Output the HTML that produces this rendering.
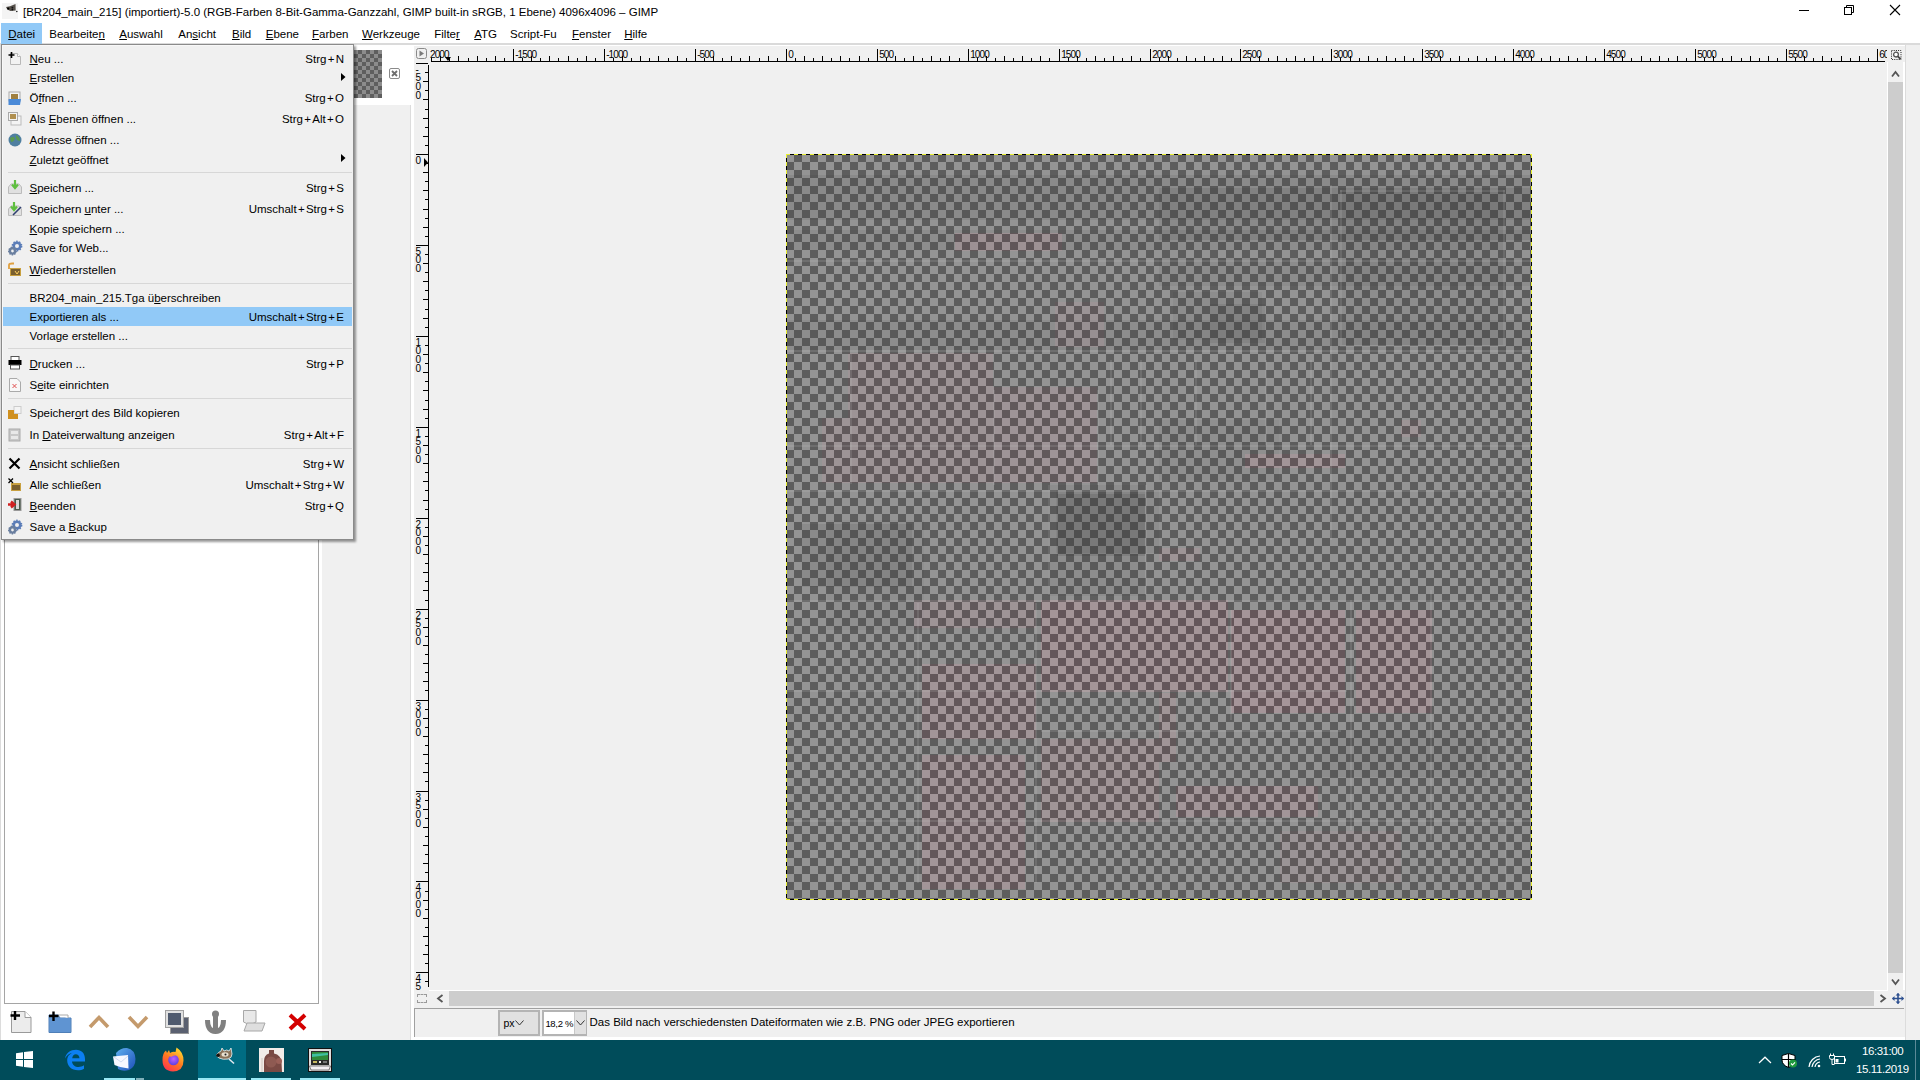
<!DOCTYPE html><html><head><meta charset="utf-8"><style>
html,body{margin:0;padding:0;}
body{width:1920px;height:1080px;overflow:hidden;position:relative;background:#f0f0f0;font-family:"Liberation Sans", sans-serif;}
.t{position:absolute;white-space:nowrap;}
.r{position:absolute;}
u{text-decoration:underline;text-underline-offset:1px;text-decoration-thickness:1px;}
svg{position:absolute;overflow:visible;}
</style></head><body>

<div class="r" style="left:0px;top:0px;width:1920px;height:43px;background:#fff"></div>
<div class="r" style="left:0px;top:43px;width:1920px;height:2px;background:#dadada"></div>
<svg style="left:0px;top:0px" width="20" height="20" viewBox="0 0 20 20"><rect x="2" y="3" width="16" height="16" fill="#f4f4f4"/><path d="M6 7 L10 6.3 L15.5 4 L15.7 10.5 L10.5 10.9 L7.3 9.6 Z" fill="#55504a"/><circle cx="8.2" cy="8.6" r="1.1" fill="#000"/><circle cx="12.4" cy="7.6" r="0.9" fill="#111"/><circle cx="12.4" cy="9.6" r="0.9" fill="#111"/><circle cx="16.8" cy="11.5" r="0.8" fill="#222"/></svg>
<div class="t" style="left:23px;top:7.27px;font-size:11.5px;line-height:11.5px;color:#000;">[BR204_main_215] (importiert)-5.0 (RGB-Farben 8-Bit-Gamma-Ganzzahl, GIMP built-in sRGB, 1 Ebene) 4096x4096 – GIMP</div>
<div class="r" style="left:1799px;top:10px;width:10px;height:1px;background:#000"></div>
<svg style="left:1843px;top:4px" width="12" height="12" viewBox="0 0 12 12"><rect x="1.5" y="3.5" width="7" height="7" fill="none" stroke="#000" stroke-width="1"/><path d="M3.5 3.5 V1.5 H10.5 V8.5 H8.5" fill="none" stroke="#000" stroke-width="1"/></svg>
<svg style="left:1889px;top:4px" width="12" height="12" viewBox="0 0 12 12"><path d="M1 1 L11 11 M11 1 L1 11" stroke="#000" stroke-width="1.1"/></svg>
<div class="r" style="left:1px;top:23px;width:41px;height:21px;background:#91c9f7"></div>
<div class="t" style="left:8.25px;top:29.07px;font-size:11.5px;line-height:11.5px;color:#000;"><u>D</u>atei</div>
<div class="t" style="left:49.25px;top:29.07px;font-size:11.5px;line-height:11.5px;color:#000;">Bearbeite<u>n</u></div>
<div class="t" style="left:119.25px;top:29.07px;font-size:11.5px;line-height:11.5px;color:#000;"><u>A</u>uswahl</div>
<div class="t" style="left:178.25px;top:29.07px;font-size:11.5px;line-height:11.5px;color:#000;">An<u>s</u>icht</div>
<div class="t" style="left:232px;top:29.07px;font-size:11.5px;line-height:11.5px;color:#000;"><u>B</u>ild</div>
<div class="t" style="left:265.75px;top:29.07px;font-size:11.5px;line-height:11.5px;color:#000;"><u>E</u>bene</div>
<div class="t" style="left:312px;top:29.07px;font-size:11.5px;line-height:11.5px;color:#000;"><u>F</u>arben</div>
<div class="t" style="left:362px;top:29.07px;font-size:11.5px;line-height:11.5px;color:#000;"><u>W</u>erkzeuge</div>
<div class="t" style="left:434.25px;top:29.07px;font-size:11.5px;line-height:11.5px;color:#000;">Filte<u>r</u></div>
<div class="t" style="left:474.25px;top:29.07px;font-size:11.5px;line-height:11.5px;color:#000;"><u>A</u>TG</div>
<div class="t" style="left:510px;top:29.07px;font-size:11.5px;line-height:11.5px;color:#000;">Script-Fu</div>
<div class="t" style="left:572px;top:29.07px;font-size:11.5px;line-height:11.5px;color:#000;"><u>F</u>enster</div>
<div class="t" style="left:624.25px;top:29.07px;font-size:11.5px;line-height:11.5px;color:#000;"><u>H</u>ilfe</div>
<div class="r" style="left:0px;top:45px;width:413px;height:995px;background:#fff"></div>
<div class="r" style="left:322px;top:105px;width:88px;height:935px;background:#f0f0f0"></div>
<div class="r" style="left:410px;top:105px;width:1px;height:935px;background:#dcdcdc"></div>
<div class="r" style="left:0px;top:45px;width:1px;height:995px;background:#dcdcdc"></div>
<div class="r" style="left:4px;top:480px;width:315px;height:524px;background:#fff;border:1px solid #a5a5a5;border-top:none;box-sizing:border-box"></div>
<div class="r" style="left:330px;top:50px;width:52px;height:48px;background-color:#8c8c8c;background-image:linear-gradient(45deg,#5e5e5e 25%,transparent 25%,transparent 75%,#5e5e5e 75%),linear-gradient(45deg,#5e5e5e 25%,transparent 25%,transparent 75%,#5e5e5e 75%);background-size:8px 8px;background-position:0 0,4px 4px"></div>
<svg style="left:389px;top:68px" width="11" height="11" viewBox="0 0 11 11"><rect x="0.5" y="0.5" width="10" height="10" rx="1.5" fill="#fff" stroke="#8a8a8a"/><path d="M3 3 L8 8 M8 3 L3 8" stroke="#6e6e6e" stroke-width="1.8"/></svg>
<svg style="left:10px;top:1010px" width="22" height="24" viewBox="0 0 22 24"><path d="M1.5 1.5 H15 L21 7.5 V22.5 H1.5 Z" fill="#ececec" stroke="#9a9a9a"/><path d="M15 1.5 V7.5 H21" fill="#fff" stroke="#9a9a9a"/><path d="M5 1 V10 M0.5 5.5 H10" stroke="#000" stroke-width="2.4"/></svg>
<svg style="left:48px;top:1011px" width="24" height="23" viewBox="0 0 24 23"><path d="M1 4 H10 L12 7 H23 V21.5 H1 Z" fill="#6a9fd8" stroke="#4f7fb8"/><rect x="2" y="7" width="20" height="14" fill="#5f94d2"/><path d="M10 4 H20 V7" fill="#fff" stroke="#aaa"/><path d="M5.5 0.5 V10 M1 5 H10.5" stroke="#000" stroke-width="2.4"/></svg>
<svg style="left:88px;top:1014px" width="22" height="15" viewBox="0 0 22 15"><path d="M2 13 L11 3.5 L20 13" fill="none" stroke="#c49a6c" stroke-width="3.6"/></svg>
<svg style="left:127px;top:1015px" width="22" height="15" viewBox="0 0 22 15"><path d="M2 2 L11 11.5 L20 2" fill="none" stroke="#c49a6c" stroke-width="3.6"/></svg>
<svg style="left:165px;top:1010px" width="24" height="24" viewBox="0 0 24 24"><rect x="5.5" y="7.5" width="18" height="16" fill="#5a6070" stroke="#9a9a9a"/><rect x="0.5" y="0.5" width="18" height="17" fill="#e0e0e0" stroke="#a0a0a0"/><rect x="3" y="3" width="13" height="12" fill="#4f5a6e"/></svg>
<svg style="left:204px;top:1010px" width="23" height="24" viewBox="0 0 23 24"><path d="M11.5 3 V20 M3.5 10 Q3.5 21 11.5 21.5 Q19.5 21 19.5 10" fill="none" stroke="#808080" stroke-width="5"/><circle cx="11.5" cy="4" r="3.5" fill="#808080"/></svg>
<svg style="left:243px;top:1010px" width="23" height="22" viewBox="0 0 23 22"><path d="M0.5 0.5 H13 V12 L7 15 L0.5 12 Z" fill="#e8e8e8" stroke="#a8a8a8"/><path d="M4 13 H22 L19 21 H1 Z" fill="#dedede" stroke="#a8a8a8"/></svg>
<svg style="left:288px;top:1013px" width="19" height="18" viewBox="0 0 19 18"><path d="M2 2 L17 16 M17 2 L2 16" stroke="#d40000" stroke-width="4"/></svg>
<div class="r" style="left:411px;top:45px;width:3px;height:995px;background:#fff"></div>
<div class="r" style="left:411px;top:45px;width:1494px;height:1px;background:#fff"></div>
<div class="r" style="left:1905px;top:45px;width:1px;height:995px;background:#dcdcdc"></div>
<div class="r" style="left:1906px;top:45px;width:14px;height:995px;background:#f0f0f0"></div>
<svg style="left:416px;top:48px" width="11" height="11" viewBox="0 0 11 11"><rect x="0.5" y="0.5" width="10" height="10" rx="2" fill="none" stroke="#8a8a8a"/><path d="M3.5 2.5 L8 5.5 L3.5 8.5 Z" fill="#7a7a7a"/></svg>
<svg style="left:0;top:0" width="1920" height="1080"><rect x="431" y="61" width="1454" height="1" fill="#000"/><rect x="431" y="58" width="1" height="3" fill="#000"/><rect x="440" y="56" width="1" height="5" fill="#000"/><rect x="449" y="58" width="1" height="3" fill="#000"/><rect x="458" y="56" width="1" height="5" fill="#000"/><rect x="468" y="58" width="1" height="3" fill="#000"/><rect x="477" y="56" width="1" height="5" fill="#000"/><rect x="486" y="58" width="1" height="3" fill="#000"/><rect x="495" y="56" width="1" height="5" fill="#000"/><rect x="504" y="58" width="1" height="3" fill="#000"/><rect x="513" y="49" width="1" height="12" fill="#000"/><rect x="522" y="58" width="1" height="3" fill="#000"/><rect x="531" y="56" width="1" height="5" fill="#000"/><rect x="540" y="58" width="1" height="3" fill="#000"/><rect x="549" y="56" width="1" height="5" fill="#000"/><rect x="558" y="58" width="1" height="3" fill="#000"/><rect x="568" y="56" width="1" height="5" fill="#000"/><rect x="577" y="58" width="1" height="3" fill="#000"/><rect x="586" y="56" width="1" height="5" fill="#000"/><rect x="595" y="58" width="1" height="3" fill="#000"/><rect x="604" y="49" width="1" height="12" fill="#000"/><rect x="613" y="58" width="1" height="3" fill="#000"/><rect x="622" y="56" width="1" height="5" fill="#000"/><rect x="631" y="58" width="1" height="3" fill="#000"/><rect x="640" y="56" width="1" height="5" fill="#000"/><rect x="649" y="58" width="1" height="3" fill="#000"/><rect x="658" y="56" width="1" height="5" fill="#000"/><rect x="668" y="58" width="1" height="3" fill="#000"/><rect x="677" y="56" width="1" height="5" fill="#000"/><rect x="686" y="58" width="1" height="3" fill="#000"/><rect x="695" y="49" width="1" height="12" fill="#000"/><rect x="704" y="58" width="1" height="3" fill="#000"/><rect x="713" y="56" width="1" height="5" fill="#000"/><rect x="722" y="58" width="1" height="3" fill="#000"/><rect x="731" y="56" width="1" height="5" fill="#000"/><rect x="740" y="58" width="1" height="3" fill="#000"/><rect x="749" y="56" width="1" height="5" fill="#000"/><rect x="759" y="58" width="1" height="3" fill="#000"/><rect x="768" y="56" width="1" height="5" fill="#000"/><rect x="777" y="58" width="1" height="3" fill="#000"/><rect x="786" y="49" width="1" height="12" fill="#000"/><rect x="795" y="58" width="1" height="3" fill="#000"/><rect x="804" y="56" width="1" height="5" fill="#000"/><rect x="813" y="58" width="1" height="3" fill="#000"/><rect x="822" y="56" width="1" height="5" fill="#000"/><rect x="831" y="58" width="1" height="3" fill="#000"/><rect x="840" y="56" width="1" height="5" fill="#000"/><rect x="849" y="58" width="1" height="3" fill="#000"/><rect x="859" y="56" width="1" height="5" fill="#000"/><rect x="868" y="58" width="1" height="3" fill="#000"/><rect x="877" y="49" width="1" height="12" fill="#000"/><rect x="886" y="58" width="1" height="3" fill="#000"/><rect x="895" y="56" width="1" height="5" fill="#000"/><rect x="904" y="58" width="1" height="3" fill="#000"/><rect x="913" y="56" width="1" height="5" fill="#000"/><rect x="922" y="58" width="1" height="3" fill="#000"/><rect x="931" y="56" width="1" height="5" fill="#000"/><rect x="940" y="58" width="1" height="3" fill="#000"/><rect x="949" y="56" width="1" height="5" fill="#000"/><rect x="959" y="58" width="1" height="3" fill="#000"/><rect x="968" y="49" width="1" height="12" fill="#000"/><rect x="977" y="58" width="1" height="3" fill="#000"/><rect x="986" y="56" width="1" height="5" fill="#000"/><rect x="995" y="58" width="1" height="3" fill="#000"/><rect x="1004" y="56" width="1" height="5" fill="#000"/><rect x="1013" y="58" width="1" height="3" fill="#000"/><rect x="1022" y="56" width="1" height="5" fill="#000"/><rect x="1031" y="58" width="1" height="3" fill="#000"/><rect x="1040" y="56" width="1" height="5" fill="#000"/><rect x="1049" y="58" width="1" height="3" fill="#000"/><rect x="1059" y="49" width="1" height="12" fill="#000"/><rect x="1068" y="58" width="1" height="3" fill="#000"/><rect x="1077" y="56" width="1" height="5" fill="#000"/><rect x="1086" y="58" width="1" height="3" fill="#000"/><rect x="1095" y="56" width="1" height="5" fill="#000"/><rect x="1104" y="58" width="1" height="3" fill="#000"/><rect x="1113" y="56" width="1" height="5" fill="#000"/><rect x="1122" y="58" width="1" height="3" fill="#000"/><rect x="1131" y="56" width="1" height="5" fill="#000"/><rect x="1140" y="58" width="1" height="3" fill="#000"/><rect x="1150" y="49" width="1" height="12" fill="#000"/><rect x="1159" y="58" width="1" height="3" fill="#000"/><rect x="1168" y="56" width="1" height="5" fill="#000"/><rect x="1177" y="58" width="1" height="3" fill="#000"/><rect x="1186" y="56" width="1" height="5" fill="#000"/><rect x="1195" y="58" width="1" height="3" fill="#000"/><rect x="1204" y="56" width="1" height="5" fill="#000"/><rect x="1213" y="58" width="1" height="3" fill="#000"/><rect x="1222" y="56" width="1" height="5" fill="#000"/><rect x="1231" y="58" width="1" height="3" fill="#000"/><rect x="1240" y="49" width="1" height="12" fill="#000"/><rect x="1250" y="58" width="1" height="3" fill="#000"/><rect x="1259" y="56" width="1" height="5" fill="#000"/><rect x="1268" y="58" width="1" height="3" fill="#000"/><rect x="1277" y="56" width="1" height="5" fill="#000"/><rect x="1286" y="58" width="1" height="3" fill="#000"/><rect x="1295" y="56" width="1" height="5" fill="#000"/><rect x="1304" y="58" width="1" height="3" fill="#000"/><rect x="1313" y="56" width="1" height="5" fill="#000"/><rect x="1322" y="58" width="1" height="3" fill="#000"/><rect x="1331" y="49" width="1" height="12" fill="#000"/><rect x="1340" y="58" width="1" height="3" fill="#000"/><rect x="1350" y="56" width="1" height="5" fill="#000"/><rect x="1359" y="58" width="1" height="3" fill="#000"/><rect x="1368" y="56" width="1" height="5" fill="#000"/><rect x="1377" y="58" width="1" height="3" fill="#000"/><rect x="1386" y="56" width="1" height="5" fill="#000"/><rect x="1395" y="58" width="1" height="3" fill="#000"/><rect x="1404" y="56" width="1" height="5" fill="#000"/><rect x="1413" y="58" width="1" height="3" fill="#000"/><rect x="1422" y="49" width="1" height="12" fill="#000"/><rect x="1431" y="58" width="1" height="3" fill="#000"/><rect x="1440" y="56" width="1" height="5" fill="#000"/><rect x="1450" y="58" width="1" height="3" fill="#000"/><rect x="1459" y="56" width="1" height="5" fill="#000"/><rect x="1468" y="58" width="1" height="3" fill="#000"/><rect x="1477" y="56" width="1" height="5" fill="#000"/><rect x="1486" y="58" width="1" height="3" fill="#000"/><rect x="1495" y="56" width="1" height="5" fill="#000"/><rect x="1504" y="58" width="1" height="3" fill="#000"/><rect x="1513" y="49" width="1" height="12" fill="#000"/><rect x="1522" y="58" width="1" height="3" fill="#000"/><rect x="1531" y="56" width="1" height="5" fill="#000"/><rect x="1541" y="58" width="1" height="3" fill="#000"/><rect x="1550" y="56" width="1" height="5" fill="#000"/><rect x="1559" y="58" width="1" height="3" fill="#000"/><rect x="1568" y="56" width="1" height="5" fill="#000"/><rect x="1577" y="58" width="1" height="3" fill="#000"/><rect x="1586" y="56" width="1" height="5" fill="#000"/><rect x="1595" y="58" width="1" height="3" fill="#000"/><rect x="1604" y="49" width="1" height="12" fill="#000"/><rect x="1613" y="58" width="1" height="3" fill="#000"/><rect x="1622" y="56" width="1" height="5" fill="#000"/><rect x="1631" y="58" width="1" height="3" fill="#000"/><rect x="1641" y="56" width="1" height="5" fill="#000"/><rect x="1650" y="58" width="1" height="3" fill="#000"/><rect x="1659" y="56" width="1" height="5" fill="#000"/><rect x="1668" y="58" width="1" height="3" fill="#000"/><rect x="1677" y="56" width="1" height="5" fill="#000"/><rect x="1686" y="58" width="1" height="3" fill="#000"/><rect x="1695" y="49" width="1" height="12" fill="#000"/><rect x="1704" y="58" width="1" height="3" fill="#000"/><rect x="1713" y="56" width="1" height="5" fill="#000"/><rect x="1722" y="58" width="1" height="3" fill="#000"/><rect x="1731" y="56" width="1" height="5" fill="#000"/><rect x="1741" y="58" width="1" height="3" fill="#000"/><rect x="1750" y="56" width="1" height="5" fill="#000"/><rect x="1759" y="58" width="1" height="3" fill="#000"/><rect x="1768" y="56" width="1" height="5" fill="#000"/><rect x="1777" y="58" width="1" height="3" fill="#000"/><rect x="1786" y="49" width="1" height="12" fill="#000"/><rect x="1795" y="58" width="1" height="3" fill="#000"/><rect x="1804" y="56" width="1" height="5" fill="#000"/><rect x="1813" y="58" width="1" height="3" fill="#000"/><rect x="1822" y="56" width="1" height="5" fill="#000"/><rect x="1831" y="58" width="1" height="3" fill="#000"/><rect x="1841" y="56" width="1" height="5" fill="#000"/><rect x="1850" y="58" width="1" height="3" fill="#000"/><rect x="1859" y="56" width="1" height="5" fill="#000"/><rect x="1868" y="58" width="1" height="3" fill="#000"/><rect x="1877" y="49" width="1" height="12" fill="#000"/><rect x="428" y="65" width="1" height="922" fill="#000"/><rect x="416" y="63" width="12" height="1" fill="#000"/><rect x="425" y="72" width="3" height="1" fill="#000"/><rect x="423" y="81" width="5" height="1" fill="#000"/><rect x="425" y="90" width="3" height="1" fill="#000"/><rect x="423" y="99" width="5" height="1" fill="#000"/><rect x="425" y="109" width="3" height="1" fill="#000"/><rect x="423" y="118" width="5" height="1" fill="#000"/><rect x="425" y="127" width="3" height="1" fill="#000"/><rect x="423" y="136" width="5" height="1" fill="#000"/><rect x="425" y="145" width="3" height="1" fill="#000"/><rect x="416" y="154" width="12" height="1" fill="#000"/><rect x="425" y="163" width="3" height="1" fill="#000"/><rect x="423" y="172" width="5" height="1" fill="#000"/><rect x="425" y="181" width="3" height="1" fill="#000"/><rect x="423" y="190" width="5" height="1" fill="#000"/><rect x="425" y="199" width="3" height="1" fill="#000"/><rect x="423" y="209" width="5" height="1" fill="#000"/><rect x="425" y="218" width="3" height="1" fill="#000"/><rect x="423" y="227" width="5" height="1" fill="#000"/><rect x="425" y="236" width="3" height="1" fill="#000"/><rect x="416" y="245" width="12" height="1" fill="#000"/><rect x="425" y="254" width="3" height="1" fill="#000"/><rect x="423" y="263" width="5" height="1" fill="#000"/><rect x="425" y="272" width="3" height="1" fill="#000"/><rect x="423" y="281" width="5" height="1" fill="#000"/><rect x="425" y="290" width="3" height="1" fill="#000"/><rect x="423" y="299" width="5" height="1" fill="#000"/><rect x="425" y="309" width="3" height="1" fill="#000"/><rect x="423" y="318" width="5" height="1" fill="#000"/><rect x="425" y="327" width="3" height="1" fill="#000"/><rect x="416" y="336" width="12" height="1" fill="#000"/><rect x="425" y="345" width="3" height="1" fill="#000"/><rect x="423" y="354" width="5" height="1" fill="#000"/><rect x="425" y="363" width="3" height="1" fill="#000"/><rect x="423" y="372" width="5" height="1" fill="#000"/><rect x="425" y="381" width="3" height="1" fill="#000"/><rect x="423" y="390" width="5" height="1" fill="#000"/><rect x="425" y="400" width="3" height="1" fill="#000"/><rect x="423" y="409" width="5" height="1" fill="#000"/><rect x="425" y="418" width="3" height="1" fill="#000"/><rect x="416" y="427" width="12" height="1" fill="#000"/><rect x="425" y="436" width="3" height="1" fill="#000"/><rect x="423" y="445" width="5" height="1" fill="#000"/><rect x="425" y="454" width="3" height="1" fill="#000"/><rect x="423" y="463" width="5" height="1" fill="#000"/><rect x="425" y="472" width="3" height="1" fill="#000"/><rect x="423" y="481" width="5" height="1" fill="#000"/><rect x="425" y="490" width="3" height="1" fill="#000"/><rect x="423" y="500" width="5" height="1" fill="#000"/><rect x="425" y="509" width="3" height="1" fill="#000"/><rect x="416" y="518" width="12" height="1" fill="#000"/><rect x="425" y="527" width="3" height="1" fill="#000"/><rect x="423" y="536" width="5" height="1" fill="#000"/><rect x="425" y="545" width="3" height="1" fill="#000"/><rect x="423" y="554" width="5" height="1" fill="#000"/><rect x="425" y="563" width="3" height="1" fill="#000"/><rect x="423" y="572" width="5" height="1" fill="#000"/><rect x="425" y="581" width="3" height="1" fill="#000"/><rect x="423" y="590" width="5" height="1" fill="#000"/><rect x="425" y="600" width="3" height="1" fill="#000"/><rect x="416" y="609" width="12" height="1" fill="#000"/><rect x="425" y="618" width="3" height="1" fill="#000"/><rect x="423" y="627" width="5" height="1" fill="#000"/><rect x="425" y="636" width="3" height="1" fill="#000"/><rect x="423" y="645" width="5" height="1" fill="#000"/><rect x="425" y="654" width="3" height="1" fill="#000"/><rect x="423" y="663" width="5" height="1" fill="#000"/><rect x="425" y="672" width="3" height="1" fill="#000"/><rect x="423" y="681" width="5" height="1" fill="#000"/><rect x="425" y="690" width="3" height="1" fill="#000"/><rect x="416" y="700" width="12" height="1" fill="#000"/><rect x="425" y="709" width="3" height="1" fill="#000"/><rect x="423" y="718" width="5" height="1" fill="#000"/><rect x="425" y="727" width="3" height="1" fill="#000"/><rect x="423" y="736" width="5" height="1" fill="#000"/><rect x="425" y="745" width="3" height="1" fill="#000"/><rect x="423" y="754" width="5" height="1" fill="#000"/><rect x="425" y="763" width="3" height="1" fill="#000"/><rect x="423" y="772" width="5" height="1" fill="#000"/><rect x="425" y="781" width="3" height="1" fill="#000"/><rect x="416" y="791" width="12" height="1" fill="#000"/><rect x="425" y="800" width="3" height="1" fill="#000"/><rect x="423" y="809" width="5" height="1" fill="#000"/><rect x="425" y="818" width="3" height="1" fill="#000"/><rect x="423" y="827" width="5" height="1" fill="#000"/><rect x="425" y="836" width="3" height="1" fill="#000"/><rect x="423" y="845" width="5" height="1" fill="#000"/><rect x="425" y="854" width="3" height="1" fill="#000"/><rect x="423" y="863" width="5" height="1" fill="#000"/><rect x="425" y="872" width="3" height="1" fill="#000"/><rect x="416" y="881" width="12" height="1" fill="#000"/><rect x="425" y="891" width="3" height="1" fill="#000"/><rect x="423" y="900" width="5" height="1" fill="#000"/><rect x="425" y="909" width="3" height="1" fill="#000"/><rect x="423" y="918" width="5" height="1" fill="#000"/><rect x="425" y="927" width="3" height="1" fill="#000"/><rect x="423" y="936" width="5" height="1" fill="#000"/><rect x="425" y="945" width="3" height="1" fill="#000"/><rect x="423" y="954" width="5" height="1" fill="#000"/><rect x="425" y="963" width="3" height="1" fill="#000"/><rect x="416" y="972" width="12" height="1" fill="#000"/><rect x="425" y="981" width="3" height="1" fill="#000"/><path d="M445 57 L451 57 L448 61 Z" fill="#000"/><path d="M424 158 L428 162.5 L424 167 Z" fill="#000"/></svg>
<div class="r" style="left:429px;top:46px;width:1458px;height:15px;overflow:hidden">
<div class="t" style="left:1.00px;top:4px;font-size:10px;line-height:10px;letter-spacing:-0.9px;color:#000">2000</div>
<div class="t" style="left:86.20px;top:4px;font-size:10px;line-height:10px;letter-spacing:-0.9px;color:#000">-1500</div>
<div class="t" style="left:177.20px;top:4px;font-size:10px;line-height:10px;letter-spacing:-0.9px;color:#000">-1000</div>
<div class="t" style="left:268.20px;top:4px;font-size:10px;line-height:10px;letter-spacing:-0.9px;color:#000">-500</div>
<div class="t" style="left:359.20px;top:4px;font-size:10px;line-height:10px;letter-spacing:-0.9px;color:#000">0</div>
<div class="t" style="left:450.20px;top:4px;font-size:10px;line-height:10px;letter-spacing:-0.9px;color:#000">500</div>
<div class="t" style="left:541.20px;top:4px;font-size:10px;line-height:10px;letter-spacing:-0.9px;color:#000">1000</div>
<div class="t" style="left:632.20px;top:4px;font-size:10px;line-height:10px;letter-spacing:-0.9px;color:#000">1500</div>
<div class="t" style="left:723.20px;top:4px;font-size:10px;line-height:10px;letter-spacing:-0.9px;color:#000">2000</div>
<div class="t" style="left:813.20px;top:4px;font-size:10px;line-height:10px;letter-spacing:-0.9px;color:#000">2500</div>
<div class="t" style="left:904.20px;top:4px;font-size:10px;line-height:10px;letter-spacing:-0.9px;color:#000">3000</div>
<div class="t" style="left:995.20px;top:4px;font-size:10px;line-height:10px;letter-spacing:-0.9px;color:#000">3500</div>
<div class="t" style="left:1086.20px;top:4px;font-size:10px;line-height:10px;letter-spacing:-0.9px;color:#000">4000</div>
<div class="t" style="left:1177.20px;top:4px;font-size:10px;line-height:10px;letter-spacing:-0.9px;color:#000">4500</div>
<div class="t" style="left:1268.20px;top:4px;font-size:10px;line-height:10px;letter-spacing:-0.9px;color:#000">5000</div>
<div class="t" style="left:1359.20px;top:4px;font-size:10px;line-height:10px;letter-spacing:-0.9px;color:#000">5500</div>
<div class="t" style="left:1450.20px;top:4px;font-size:10px;line-height:10px;letter-spacing:-0.9px;color:#000">6000</div>
</div>
<div class="r" style="left:414px;top:62px;width:13px;height:928px;overflow:hidden">
<div class="t" style="left:1.6px;top:2.50px;font-size:10px;line-height:10px;color:#000">-</div>
<div class="t" style="left:1.6px;top:11.35px;font-size:10px;line-height:10px;color:#000">5</div>
<div class="t" style="left:1.6px;top:20.20px;font-size:10px;line-height:10px;color:#000">0</div>
<div class="t" style="left:1.6px;top:29.05px;font-size:10px;line-height:10px;color:#000">0</div>
<div class="t" style="left:1.6px;top:93.50px;font-size:10px;line-height:10px;color:#000">0</div>
<div class="t" style="left:1.6px;top:184.50px;font-size:10px;line-height:10px;color:#000">5</div>
<div class="t" style="left:1.6px;top:193.35px;font-size:10px;line-height:10px;color:#000">0</div>
<div class="t" style="left:1.6px;top:202.20px;font-size:10px;line-height:10px;color:#000">0</div>
<div class="t" style="left:1.6px;top:275.50px;font-size:10px;line-height:10px;color:#000">1</div>
<div class="t" style="left:1.6px;top:284.35px;font-size:10px;line-height:10px;color:#000">0</div>
<div class="t" style="left:1.6px;top:293.20px;font-size:10px;line-height:10px;color:#000">0</div>
<div class="t" style="left:1.6px;top:302.05px;font-size:10px;line-height:10px;color:#000">0</div>
<div class="t" style="left:1.6px;top:366.50px;font-size:10px;line-height:10px;color:#000">1</div>
<div class="t" style="left:1.6px;top:375.35px;font-size:10px;line-height:10px;color:#000">5</div>
<div class="t" style="left:1.6px;top:384.20px;font-size:10px;line-height:10px;color:#000">0</div>
<div class="t" style="left:1.6px;top:393.05px;font-size:10px;line-height:10px;color:#000">0</div>
<div class="t" style="left:1.6px;top:457.50px;font-size:10px;line-height:10px;color:#000">2</div>
<div class="t" style="left:1.6px;top:466.35px;font-size:10px;line-height:10px;color:#000">0</div>
<div class="t" style="left:1.6px;top:475.20px;font-size:10px;line-height:10px;color:#000">0</div>
<div class="t" style="left:1.6px;top:484.05px;font-size:10px;line-height:10px;color:#000">0</div>
<div class="t" style="left:1.6px;top:548.50px;font-size:10px;line-height:10px;color:#000">2</div>
<div class="t" style="left:1.6px;top:557.35px;font-size:10px;line-height:10px;color:#000">5</div>
<div class="t" style="left:1.6px;top:566.20px;font-size:10px;line-height:10px;color:#000">0</div>
<div class="t" style="left:1.6px;top:575.05px;font-size:10px;line-height:10px;color:#000">0</div>
<div class="t" style="left:1.6px;top:639.50px;font-size:10px;line-height:10px;color:#000">3</div>
<div class="t" style="left:1.6px;top:648.35px;font-size:10px;line-height:10px;color:#000">0</div>
<div class="t" style="left:1.6px;top:657.20px;font-size:10px;line-height:10px;color:#000">0</div>
<div class="t" style="left:1.6px;top:666.05px;font-size:10px;line-height:10px;color:#000">0</div>
<div class="t" style="left:1.6px;top:730.50px;font-size:10px;line-height:10px;color:#000">3</div>
<div class="t" style="left:1.6px;top:739.35px;font-size:10px;line-height:10px;color:#000">5</div>
<div class="t" style="left:1.6px;top:748.20px;font-size:10px;line-height:10px;color:#000">0</div>
<div class="t" style="left:1.6px;top:757.05px;font-size:10px;line-height:10px;color:#000">0</div>
<div class="t" style="left:1.6px;top:820.50px;font-size:10px;line-height:10px;color:#000">4</div>
<div class="t" style="left:1.6px;top:829.35px;font-size:10px;line-height:10px;color:#000">0</div>
<div class="t" style="left:1.6px;top:838.20px;font-size:10px;line-height:10px;color:#000">0</div>
<div class="t" style="left:1.6px;top:847.05px;font-size:10px;line-height:10px;color:#000">0</div>
<div class="t" style="left:1.6px;top:911.50px;font-size:10px;line-height:10px;color:#000">4</div>
<div class="t" style="left:1.6px;top:920.35px;font-size:10px;line-height:10px;color:#000">5</div>
<div class="t" style="left:1.6px;top:929.20px;font-size:10px;line-height:10px;color:#000">0</div>
<div class="t" style="left:1.6px;top:938.05px;font-size:10px;line-height:10px;color:#000">0</div>
</div>
<div class="r" style="left:787px;top:155px;width:744px;height:744px;overflow:hidden;background-color:#949494;background-image:conic-gradient(#5d5d5d 0 25%, transparent 0 50%, #5d5d5d 0 75%, transparent 0);background-size:16px 16px;background-position:23px 7px">
<div class="r" style="left:535px;top:575px;width:165px;height:47px;background:rgba(40,40,40,0.060)"></div>
<div class="r" style="left:372px;top:33px;width:373px;height:52px;background:rgba(40,40,40,0.084)"></div>
<div class="r" style="left:372px;top:103px;width:373px;height:28px;background:rgba(40,40,40,0.072)"></div>
<div class="r" style="left:553px;top:35px;width:165px;height:155px;background:rgba(40,40,40,0.060)"></div>
<div class="r" style="left:372px;top:265px;width:120px;height:60px;background:rgba(40,40,40,0.048)"></div>
<div class="r" style="left:0px;top:20px;width:744px;height:45px;background:rgba(40,40,40,0.096)"></div>
<div class="r" style="left:0px;top:75px;width:744px;height:20px;background:rgba(40,40,40,0.060)"></div>
<div class="r" style="left:0px;top:165px;width:744px;height:30px;background:rgba(40,40,40,0.060)"></div>
<div class="r" style="left:270px;top:339px;width:88px;height:62px;background:rgba(40,40,40,0.132)"></div>
<div class="r" style="left:261px;top:330px;width:97px;height:111px;background:rgba(40,40,40,0.060)"></div>
<div class="r" style="left:423px;top:149px;width:55px;height:39px;background:rgba(40,40,40,0.090)"></div>
<div class="r" style="left:15px;top:369px;width:110px;height:63px;background:rgba(40,40,40,0.090)"></div>
<div class="r" style="left:386px;top:137px;width:89px;height:48px;background:rgba(40,40,40,0.060)"></div>
<div class="r" style="left:40px;top:365px;width:97px;height:110px;background:rgba(40,40,40,0.048)"></div>
<div class="r" style="left:269px;top:335px;width:103px;height:63px;background:rgba(40,40,40,0.060)"></div>
<div class="r" style="left:61px;top:198px;width:145px;height:65px;opacity:0.39;background-color:rgb(172,150,155);background-image:conic-gradient(rgb(104,84,89) 0 25%, transparent 0 50%, rgb(104,84,89) 0 75%, transparent 0);background-size:16px 16px;background-position:10px 1px"></div>
<div class="r" style="left:35px;top:263px;width:171px;height:65px;opacity:0.39;background-color:rgb(172,150,155);background-image:conic-gradient(rgb(104,84,89) 0 25%, transparent 0 50%, rgb(104,84,89) 0 75%, transparent 0);background-size:16px 16px;background-position:4px 0px"></div>
<div class="r" style="left:206px;top:232px;width:104px;height:96px;opacity:0.44;background-color:rgb(172,150,155);background-image:conic-gradient(rgb(104,84,89) 0 25%, transparent 0 50%, rgb(104,84,89) 0 75%, transparent 0);background-size:16px 16px;background-position:9px 15px"></div>
<div class="r" style="left:168px;top:78px;width:107px;height:18px;opacity:0.52;background-color:rgb(172,150,155);background-image:conic-gradient(rgb(104,84,89) 0 25%, transparent 0 50%, rgb(104,84,89) 0 75%, transparent 0);background-size:16px 16px;background-position:15px 9px"></div>
<div class="r" style="left:268px;top:147px;width:49px;height:45px;opacity:0.36;background-color:rgb(172,150,155);background-image:conic-gradient(rgb(104,84,89) 0 25%, transparent 0 50%, rgb(104,84,89) 0 75%, transparent 0);background-size:16px 16px;background-position:11px 4px"></div>
<div class="r" style="left:458px;top:299px;width:100px;height:14px;opacity:0.62;background-color:rgb(172,150,155);background-image:conic-gradient(rgb(104,84,89) 0 25%, transparent 0 50%, rgb(104,84,89) 0 75%, transparent 0);background-size:16px 16px;background-position:13px 12px"></div>
<div class="r" style="left:614px;top:265px;width:20px;height:17px;opacity:0.42;background-color:rgb(172,150,155);background-image:conic-gradient(rgb(104,84,89) 0 25%, transparent 0 50%, rgb(104,84,89) 0 75%, transparent 0);background-size:16px 16px;background-position:1px 14px"></div>
<div class="r" style="left:254px;top:445px;width:187px;height:92px;opacity:0.68;background-color:rgb(172,150,155);background-image:conic-gradient(rgb(104,84,89) 0 25%, transparent 0 50%, rgb(104,84,89) 0 75%, transparent 0);background-size:16px 16px;background-position:9px 10px"></div>
<div class="r" style="left:135px;top:509px;width:114px;height:75px;opacity:0.62;background-color:rgb(172,150,155);background-image:conic-gradient(rgb(104,84,89) 0 25%, transparent 0 50%, rgb(104,84,89) 0 75%, transparent 0);background-size:16px 16px;background-position:0px 10px"></div>
<div class="r" style="left:135px;top:600px;width:103px;height:134px;opacity:0.62;background-color:rgb(172,150,155);background-image:conic-gradient(rgb(104,84,89) 0 25%, transparent 0 50%, rgb(104,84,89) 0 75%, transparent 0);background-size:16px 16px;background-position:0px 15px"></div>
<div class="r" style="left:254px;top:584px;width:118px;height:83px;opacity:0.52;background-color:rgb(172,150,155);background-image:conic-gradient(rgb(104,84,89) 0 25%, transparent 0 50%, rgb(104,84,89) 0 75%, transparent 0);background-size:16px 16px;background-position:9px 15px"></div>
<div class="r" style="left:127px;top:445px;width:122px;height:28px;opacity:0.42;background-color:rgb(172,150,155);background-image:conic-gradient(rgb(104,84,89) 0 25%, transparent 0 50%, rgb(104,84,89) 0 75%, transparent 0);background-size:16px 16px;background-position:8px 10px"></div>
<div class="r" style="left:444px;top:455px;width:114px;height:103px;opacity:0.73;background-color:rgb(172,150,155);background-image:conic-gradient(rgb(104,84,89) 0 25%, transparent 0 50%, rgb(104,84,89) 0 75%, transparent 0);background-size:16px 16px;background-position:11px 0px"></div>
<div class="r" style="left:569px;top:455px;width:76px;height:103px;opacity:0.68;background-color:rgb(172,150,155);background-image:conic-gradient(rgb(104,84,89) 0 25%, transparent 0 50%, rgb(104,84,89) 0 75%, transparent 0);background-size:16px 16px;background-position:14px 0px"></div>
<div class="r" style="left:389px;top:631px;width:142px;height:31px;opacity:0.62;background-color:rgb(172,150,155);background-image:conic-gradient(rgb(104,84,89) 0 25%, transparent 0 50%, rgb(104,84,89) 0 75%, transparent 0);background-size:16px 16px;background-position:2px 0px"></div>
<div class="r" style="left:372px;top:393px;width:41px;height:13px;opacity:0.42;background-color:rgb(172,150,155);background-image:conic-gradient(rgb(104,84,89) 0 25%, transparent 0 50%, rgb(104,84,89) 0 75%, transparent 0);background-size:16px 16px;background-position:3px 14px"></div>
<div class="r" style="left:372px;top:538px;width:17px;height:69px;opacity:0.52;background-color:rgb(172,150,155);background-image:conic-gradient(rgb(104,84,89) 0 25%, transparent 0 50%, rgb(104,84,89) 0 75%, transparent 0);background-size:16px 16px;background-position:3px 13px"></div>
<div class="r" style="left:493px;top:676px;width:121px;height:52px;opacity:0.31;background-color:rgb(172,150,155);background-image:conic-gradient(rgb(104,84,89) 0 25%, transparent 0 50%, rgb(104,84,89) 0 75%, transparent 0);background-size:16px 16px;background-position:10px 3px"></div>
<div class="r" style="left:0px;top:445px;width:744px;height:2px;background:rgba(200,200,200,0.16)"></div>
<div class="r" style="left:0px;top:535px;width:560px;height:2px;background:rgba(200,200,200,0.16)"></div>
<div class="r" style="left:254px;top:575px;width:300px;height:2px;background:rgba(200,200,200,0.16)"></div>
<div class="r" style="left:0px;top:665px;width:744px;height:2px;background:rgba(200,200,200,0.16)"></div>
<div class="r" style="left:0px;top:195px;width:744px;height:2px;background:rgba(200,200,200,0.16)"></div>
<div class="r" style="left:0px;top:290px;width:744px;height:2px;background:rgba(200,200,200,0.16)"></div>
<div class="r" style="left:0px;top:105px;width:744px;height:2px;background:rgba(200,200,200,0.16)"></div>
<div class="r" style="left:0px;top:335px;width:744px;height:2px;background:rgba(200,200,200,0.16)"></div>
<div class="r" style="left:248px;top:448px;width:2px;height:280px;background:rgba(200,200,200,0.16)"></div>
<div class="r" style="left:443px;top:455px;width:2px;height:110px;background:rgba(200,200,200,0.16)"></div>
<div class="r" style="left:563px;top:445px;width:2px;height:230px;background:rgba(200,200,200,0.16)"></div>
<div class="r" style="left:643px;top:435px;width:2px;height:250px;background:rgba(200,200,200,0.16)"></div>
<div class="r" style="left:718px;top:405px;width:2px;height:330px;background:rgba(200,200,200,0.16)"></div>
<div class="r" style="left:543px;top:30px;width:2px;height:355px;background:rgba(200,200,200,0.16)"></div>
<div class="r" style="left:323px;top:205px;width:2px;height:85px;background:rgba(200,200,200,0.16)"></div>
<div class="r" style="left:353px;top:205px;width:2px;height:85px;background:rgba(200,200,200,0.16)"></div>
<div class="r" style="left:408px;top:205px;width:2px;height:85px;background:rgba(200,200,200,0.16)"></div>
<div class="r" style="left:478px;top:205px;width:2px;height:85px;background:rgba(200,200,200,0.16)"></div>
<div class="r" style="left:523px;top:205px;width:2px;height:85px;background:rgba(200,200,200,0.16)"></div>
<div class="r" style="left:553px;top:35px;width:165px;height:2px;background:rgba(200,200,200,0.16)"></div>
<div class="r" style="left:553px;top:190px;width:165px;height:2px;background:rgba(200,200,200,0.16)"></div>
<div class="r" style="left:553px;top:35px;width:2px;height:155px;background:rgba(200,200,200,0.16)"></div>
<div class="r" style="left:716px;top:35px;width:2px;height:155px;background:rgba(200,200,200,0.16)"></div>
<div class="r" style="left:130px;top:448px;width:2px;height:280px;background:rgba(200,200,200,0.16)"></div>
<div class="r" style="left:63px;top:199px;width:2px;height:130px;background:rgba(200,200,200,0.16)"></div>
<div class="r" style="left:206px;top:235px;width:2px;height:95px;background:rgba(200,200,200,0.16)"></div>
<div class="r" style="left:310px;top:235px;width:2px;height:95px;background:rgba(200,200,200,0.16)"></div>
<div class="r" style="left:358px;top:330px;width:2px;height:110px;background:rgba(200,200,200,0.16)"></div>
<div class="r" style="left:261px;top:330px;width:2px;height:110px;background:rgba(200,200,200,0.16)"></div>
</div>
<div class="r" style="left:786px;top:154px;width:746px;height:746px;box-sizing:border-box;background:repeating-linear-gradient(90deg,#e8f030 0 4px,#000 4px 8px) top/100% 1px no-repeat,repeating-linear-gradient(90deg,#e8f030 0 4px,#000 4px 8px) bottom/100% 1px no-repeat,repeating-linear-gradient(180deg,#e8f030 0 4px,#000 4px 8px) left/1px 100% no-repeat,repeating-linear-gradient(180deg,#e8f030 0 4px,#000 4px 8px) right/1px 100% no-repeat"></div>
<div class="r" style="left:1887px;top:62px;width:18px;height:928px;background:#fff"></div>
<div class="r" style="left:1888px;top:62px;width:15px;height:928px;background:#f0f0f0"></div>
<svg style="left:1891px;top:70px" width="9" height="8" viewBox="0 0 9 8"><path d="M1 6.5 L4.5 2 L8 6.5" fill="none" stroke="#555" stroke-width="1.8"/></svg>
<div class="r" style="left:1888px;top:82px;width:15px;height:891px;background:#cdcdcd"></div>
<svg style="left:1891px;top:978px" width="9" height="8" viewBox="0 0 9 8"><path d="M1 1.5 L4.5 6 L8 1.5" fill="none" stroke="#555" stroke-width="1.8"/></svg>
<div class="r" style="left:429px;top:990px;width:1459px;height:17px;background:#f0f0f0"></div>
<div class="r" style="left:429px;top:990px;width:1459px;height:1px;background:#fff"></div>
<div class="r" style="left:449px;top:991px;width:1425px;height:15px;background:#cdcdcd"></div>
<svg style="left:436px;top:994px" width="8" height="9" viewBox="0 0 8 9"><path d="M6.5 1 L2 4.5 L6.5 8" fill="none" stroke="#555" stroke-width="1.8"/></svg>
<svg style="left:1879px;top:994px" width="8" height="9" viewBox="0 0 8 9"><path d="M1.5 1 L6 4.5 L1.5 8" fill="none" stroke="#555" stroke-width="1.8"/></svg>
<div class="r" style="left:417px;top:994px;width:10px;height:9px;border:1px dashed #9a9a9a;box-sizing:border-box"></div>
<svg style="left:1891px;top:50px" width="11" height="10" viewBox="0 0 11 10"><rect x="0.5" y="0.5" width="9.5" height="9" fill="none" stroke="#222" stroke-dasharray="1,1.2"/><circle cx="5" cy="4.6" r="2.4" fill="#fff" stroke="#555" stroke-width="1.3"/><path d="M6.8 6.4 L9.6 9.2" stroke="#444" stroke-width="1.8"/></svg>
<svg style="left:1892px;top:993px" width="12" height="11" viewBox="0 0 12 11"><path d="M6 0.5 V10.5 M0.5 5.5 H11.5" stroke="#2c4f8f" stroke-width="1.6"/><path d="M6 0 L3.5 2.5 H8.5 Z M6 11 L3.5 8.5 H8.5 Z M0 5.5 L2.5 3 V8 Z M12 5.5 L9.5 3 V8 Z" fill="#2c4f8f"/></svg>
<div class="r" style="left:414px;top:1008px;width:1490px;height:1px;background:#a0a0a0"></div>
<div class="r" style="left:414px;top:1008px;width:1px;height:30px;background:#a0a0a0"></div>
<div class="r" style="left:411px;top:1037px;width:1494px;height:3px;background:#fff"></div>
<div class="r" style="left:498px;top:1010px;width:42px;height:26px;background:#e1e1e1;border:2px solid #b4b4b4;box-sizing:border-box"></div>
<div class="t" style="left:503.5px;top:1018.11px;font-size:10.5px;line-height:10.5px;color:#000;">px</div>
<svg style="left:515px;top:1019.5px" width="9" height="6" viewBox="0 0 9 6"><path d="M0.5 0.5 L4.5 5 L8.5 0.5" fill="none" stroke="#333" stroke-width="1"/></svg>
<div class="r" style="left:542px;top:1010px;width:45px;height:26px;background:#fff;border:2px solid #b4b4b4;box-sizing:border-box"></div>
<div class="r" style="left:574px;top:1012px;width:11px;height:22px;background:#e1e1e1;border-left:1px solid #c8c8c8"></div>
<div class="t" style="left:545.4px;top:1018.96px;font-size:9.5px;line-height:9.5px;color:#000;letter-spacing:-0.3px;">18,2 %</div>
<svg style="left:576px;top:1020px" width="9" height="6" viewBox="0 0 9 6"><path d="M0.5 0.5 L4.5 5 L8.5 0.5" fill="none" stroke="#333" stroke-width="1"/></svg>
<div class="t" style="left:589.5px;top:1017.27px;font-size:11.5px;line-height:11.5px;color:#000;">Das Bild nach verschiedensten Dateiformaten wie z.B. PNG oder JPEG exportieren</div>
<div class="r" style="left:0px;top:1040px;width:1920px;height:40px;background:#004c5a"></div>
<div class="r" style="left:198px;top:1040px;width:48px;height:40px;background:#006c82"></div>
<div class="r" style="left:104px;top:1078px;width:31px;height:2px;background:#99e8f4"></div>
<div class="r" style="left:198px;top:1078px;width:48px;height:2px;background:#99e8f4"></div>
<div class="r" style="left:251px;top:1078px;width:40px;height:2px;background:#99e8f4"></div>
<div class="r" style="left:300px;top:1078px;width:40px;height:2px;background:#99e8f4"></div>
<div class="r" style="left:136px;top:1078px;width:8px;height:2px;background:#7fb0ba"></div>
<div class="r" style="left:1915px;top:1040px;width:1px;height:40px;background:#5a8a98"></div>
<svg style="left:16px;top:1051px" width="17" height="17" viewBox="0 0 17 17"><path d="M0 2.3 L7 1.3 V8 H0 Z M8 1.1 L17 0 V8 H8 Z M0 9 H7 V15.7 L0 14.7 Z M8 9 H17 V17 L8 15.9 Z" fill="#fff"/></svg>
<svg style="left:64px;top:1049px" width="22" height="22" viewBox="0 0 22 22"><path d="M1 9.5 C2 4 6.5 0.8 12 0.8 C17.5 0.8 21 4.5 21 10 V12.5 H8 C8.3 16 11 18 14.5 18 C16.5 18 18.5 17.3 20 16.3 V19.8 C18.3 20.8 16.2 21.3 14 21.3 C7.5 21.3 3.2 17 3.2 11.5 C3.2 7.5 5.5 5 8.5 3.8 C5 4.5 2.5 6.5 1 9.5 Z M8.2 9.3 H15.5 C15.3 6.7 13.8 5.3 11.8 5.3 C9.9 5.3 8.6 6.8 8.2 9.3 Z" fill="#0c7ff2"/></svg>
<svg style="left:112px;top:1047px" width="25" height="25" viewBox="0 0 25 25"><defs><linearGradient id="tbg" x1="0" y1="0" x2="1" y2="1"><stop offset="0" stop-color="#5fb0f0"/><stop offset="1" stop-color="#1d4fb8"/></linearGradient></defs><path d="M4 6 Q9 0.5 15 1 Q23 2.5 23.5 12 Q23.5 20 17 23 Q11 25 6 22 Z" fill="url(#tbg)"/><path d="M1 9.5 L16 8 L16.5 21.5 Q9 21 2.5 18 Z" fill="#f6f8ff"/><path d="M2 10 L9 15 L16 9" fill="none" stroke="#c8d4ec" stroke-width="0.8"/></svg>
<svg style="left:161px;top:1047px" width="24" height="25" viewBox="0 0 24 25"><defs><linearGradient id="ffg" x1="0.2" y1="1" x2="0.8" y2="0"><stop offset="0" stop-color="#ff3050"/><stop offset="0.5" stop-color="#ff7a20"/><stop offset="1" stop-color="#ffe030"/></linearGradient><radialGradient id="ffp" cx="0.5" cy="0.4" r="0.6"><stop offset="0" stop-color="#c060ff"/><stop offset="1" stop-color="#5a40e0"/></radialGradient></defs><path d="M1.5 13 Q1.5 6 5 3.5 L6 6 L8 3 L9 6 Q12 4 14.5 5 L15.5 0.5 Q22.5 5 22.5 13.5 Q22.5 24 12 24.5 Q1.5 24 1.5 13 Z" fill="url(#ffg)"/><circle cx="12.5" cy="13" r="5.3" fill="url(#ffp)"/><path d="M8 8.5 Q12 6.5 15 8.5 Q12 8 10 10 Z" fill="#ff9030"/></svg>
<svg style="left:214px;top:1047px" width="22" height="18" viewBox="0 0 22 18"><path d="M7 4 L8 1 L10 4 Q13 2 15 4 L17 1 L18 7 Q18 11 14 12 Q9 13 5 11 Q2 9 2.5 7.5 Q4 5.5 7 4 Z" fill="#8a7258" stroke="#d8e4e8" stroke-width="0.9"/><ellipse cx="11" cy="7.5" rx="3.5" ry="2.2" fill="#e8e0d0"/><circle cx="4" cy="8.3" r="1.8" fill="#111"/><circle cx="11.5" cy="7.5" r="1" fill="#222"/><path d="M15 12 L20 16.5" stroke="#dfe8ee" stroke-width="1.6"/></svg>
<svg style="left:259px;top:1048px" width="25" height="24" viewBox="0 0 25 24"><rect width="25" height="24" fill="#f2ece8"/><path d="M5 24 L5 13 Q5 7 10 5.5 L10 2 L15 2 L15 5.5 Q22 7 22.5 14 L23 24 Z" fill="#7a4a44"/><circle cx="12" cy="14" r="5.5" fill="#8e5a52"/><circle cx="20" cy="13" r="3" fill="#9a6058"/><path d="M3 10 V24" stroke="#c8c0b8" stroke-width="0.8"/></svg>
<svg style="left:308px;top:1048px" width="24" height="24" viewBox="0 0 24 24"><rect x="0" y="0" width="24" height="24" fill="#111"/><rect x="1" y="1" width="22" height="22" fill="#e0dcdc"/><rect x="3" y="3" width="18" height="14" fill="#2a2a2a"/><rect x="4" y="4" width="16" height="8" fill="#2f8a3a"/><path d="M4 6 L20 5 V7 L4 9 Z" fill="#3fc0a0"/><rect x="5" y="13" width="4" height="2" fill="#c8b860"/><rect x="11" y="13" width="2" height="2" fill="#eee"/><rect x="15" y="13" width="4" height="2" fill="#777"/><path d="M1.5 18 H22.5 L21 22 H3 Z" fill="#f4f0f4" stroke="#333" stroke-width="0.6"/></svg>
<svg style="left:1758px;top:1056px" width="14" height="8" viewBox="0 0 14 8"><path d="M1 7 L7 1.2 L13 7" fill="none" stroke="#fff" stroke-width="1.2"/></svg>
<svg style="left:1781px;top:1053px" width="17" height="15" viewBox="0 0 17 15"><path d="M7.5 0.5 L14 2.5 V7 Q14 12 7.5 14.5 Q1 12 1 7 V2.5 Z" fill="#fff" stroke="#000" stroke-width="1"/><path d="M7.5 0.5 V14.5 M1 6.5 H14" stroke="#000" stroke-width="1.2"/><circle cx="12" cy="10.5" r="4" fill="#1e9a3e"/><path d="M10 10.5 L11.5 12 L14 9.3" fill="none" stroke="#fff" stroke-width="1.1"/></svg>
<svg style="left:1808px;top:1054px" width="14" height="14" viewBox="0 0 14 14"><path d="M1 13 A12 12 0 0 1 12 2 M4 13 A9 9 0 0 1 12 5 M7 13 A6 6 0 0 1 12 8" fill="none" stroke="#fff" stroke-width="1.2"/><circle cx="11" cy="12" r="1.3" fill="#fff"/></svg>
<svg style="left:1829px;top:1053px" width="18" height="13" viewBox="0 0 18 13"><rect x="5.5" y="3.5" width="10" height="7" fill="none" stroke="#fff"/><rect x="15.5" y="5.5" width="1.5" height="3" fill="#fff"/><rect x="6.5" y="6" width="3" height="3.5" fill="#fff"/><path d="M1.5 0.5 V2.5 M4.5 0.5 V2.5 M0.5 2.5 H5.5 V4.5 Q5.5 6.5 3 6.5 Q0.5 6.5 0.5 4.5 Z M3 6.5 V11.5 H5.5" fill="none" stroke="#fff" stroke-width="1"/></svg>
<div class="t" style="left:1862px;top:1046.07px;font-size:11.5px;line-height:11.5px;color:#fff;letter-spacing:-0.45px;">16:31:00</div>
<div class="t" style="left:1856px;top:1064.07px;font-size:11.5px;line-height:11.5px;color:#fff;letter-spacing:-0.4px;">15.11.2019</div>
<div class="r" style="left:3px;top:46px;width:353px;height:496px;background:rgba(0,0,0,0.4);filter:blur(1.1px)"></div>
<div class="r" style="left:1px;top:44px;width:353px;height:496px;background:#f0f0f0;border:1px solid #8a8a8a;box-sizing:border-box;box-shadow:inset 1px 1px 0 #f8f8f8"></div>
<div class="r" style="left:3px;top:307px;width:349px;height:19px;background:#91c9f7"></div>
<div class="r" style="left:8px;top:172px;width:344px;height:1px;background:#d7d7d7"></div>
<div class="r" style="left:8px;top:283px;width:344px;height:1px;background:#d7d7d7"></div>
<div class="r" style="left:8px;top:348px;width:344px;height:1px;background:#d7d7d7"></div>
<div class="r" style="left:8px;top:398px;width:344px;height:1px;background:#d7d7d7"></div>
<div class="r" style="left:8px;top:448px;width:344px;height:1px;background:#d7d7d7"></div>
<div class="t" style="left:29.5px;top:53.87px;font-size:11.5px;line-height:11.5px;color:#000;"><u>N</u>eu ...</div>
<div class="t" style="right:1576px;top:53.87px;font-size:11.5px;line-height:11.5px">Strg<span style="margin:0 1.3px">+</span>N</div>
<svg style="left:8px;top:51.7px" width="14" height="14" viewBox="0 0 14 14"><path d="M2.5 1.5 H9.5 L12.5 4.5 V12.5 H2.5 Z" fill="#f2f2f2" stroke="#b8b8b8"/><path d="M9.5 1.5 V4.5 H12.5" fill="#fff" stroke="#b8b8b8"/><path d="M3.5 0 V6 M0.5 3 H6.5" stroke="#000" stroke-width="1.6"/></svg>
<div class="t" style="left:29.5px;top:73.27px;font-size:11.5px;line-height:11.5px;color:#000;"><u>E</u>rstellen</div>
<svg style="left:341px;top:72.6px" width="5" height="8" viewBox="0 0 5 8"><path d="M0 0 L4.5 4 L0 8 Z" fill="#000"/></svg>
<div class="t" style="left:29.5px;top:93.17px;font-size:11.5px;line-height:11.5px;color:#000;">Ö<u>f</u>fnen ...</div>
<div class="t" style="right:1576px;top:93.17px;font-size:11.5px;line-height:11.5px">Strg<span style="margin:0 1.3px">+</span>O</div>
<svg style="left:8px;top:91.0px" width="14" height="14" viewBox="0 0 14 14"><rect x="1" y="1" width="11" height="9" fill="#f4f4f4" stroke="#aaa"/><rect x="3" y="3" width="7" height="5" fill="#a08040"/><path d="M0.5 8 H13 L12 14 H0.5 Z" fill="#4a8ad8"/></svg>
<div class="t" style="left:29.5px;top:114.17px;font-size:11.5px;line-height:11.5px;color:#000;">Als <u>E</u>benen öffnen ...</div>
<div class="t" style="right:1576px;top:114.17px;font-size:11.5px;line-height:11.5px">Strg<span style="margin:0 1.3px">+</span>Alt<span style="margin:0 1.3px">+</span>O</div>
<svg style="left:8px;top:112.0px" width="14" height="14" viewBox="0 0 14 14"><rect x="3" y="4" width="10" height="9" fill="#f4f4f4" stroke="#bbb"/><rect x="0.5" y="0.5" width="9" height="8" fill="#f4f4f4" stroke="#aaa"/><rect x="2" y="2" width="6" height="5" fill="#b09050"/></svg>
<div class="t" style="left:29.5px;top:134.87px;font-size:11.5px;line-height:11.5px;color:#000;">Adresse öffnen ...</div>
<svg style="left:8px;top:132.7px" width="14" height="14" viewBox="0 0 14 14"><circle cx="7" cy="7" r="6.5" fill="#4f7fa0"/><path d="M2 5 Q5 3 7 5 Q6 9 3 9 Z M8 2 Q12 4 12 8 Q9 8 8 5 Z" fill="#5a9a50"/></svg>
<div class="t" style="left:29.5px;top:154.87px;font-size:11.5px;line-height:11.5px;color:#000;"><u>Z</u>uletzt geöffnet</div>
<svg style="left:341px;top:154.2px" width="5" height="8" viewBox="0 0 5 8"><path d="M0 0 L4.5 4 L0 8 Z" fill="#000"/></svg>
<div class="t" style="left:29.5px;top:182.57px;font-size:11.5px;line-height:11.5px;color:#000;"><u>S</u>peichern ...</div>
<div class="t" style="right:1576px;top:182.57px;font-size:11.5px;line-height:11.5px">Strg<span style="margin:0 1.3px">+</span>S</div>
<svg style="left:8px;top:180.4px" width="14" height="14" viewBox="0 0 14 14"><path d="M0.5 7 L3 4 H11 L13.5 7 V13.5 H0.5 Z" fill="#e0e0e0" stroke="#bbb"/><path d="M7 0 V7 M4 4.5 L7 8 L10 4.5" fill="none" stroke="#5fbf3f" stroke-width="2.2"/></svg>
<div class="t" style="left:29.5px;top:203.97px;font-size:11.5px;line-height:11.5px;color:#000;">Speichern <u>u</u>nter ...</div>
<div class="t" style="right:1576px;top:203.97px;font-size:11.5px;line-height:11.5px">Umschalt<span style="margin:0 1.3px">+</span>Strg<span style="margin:0 1.3px">+</span>S</div>
<svg style="left:8px;top:201.8px" width="14" height="14" viewBox="0 0 14 14"><path d="M0.5 7 L3 4 H11 L13.5 7 V13.5 H0.5 Z" fill="#e0e0e0" stroke="#bbb"/><path d="M6 0 V7 M3 4.5 L6 8 L9 4.5" fill="none" stroke="#5fbf3f" stroke-width="2.2"/><path d="M5 13 L13 5" stroke="#2f3f6f" stroke-width="1.6"/></svg>
<div class="t" style="left:29.5px;top:223.97px;font-size:11.5px;line-height:11.5px;color:#000;"><u>K</u>opie speichern ...</div>
<div class="t" style="left:29.5px;top:243.47px;font-size:11.5px;line-height:11.5px;color:#000;">Save for Web...</div>
<svg style="left:8px;top:241.3px" width="14" height="14" viewBox="0 0 14 14"><circle cx="9" cy="5" r="3.3" fill="none" stroke="#5b7db8" stroke-width="2.6"/><circle cx="9" cy="5" r="4.6" fill="none" stroke="#5b7db8" stroke-width="1.6" stroke-dasharray="1.5,1.4"/><circle cx="4.5" cy="10" r="2.6" fill="none" stroke="#6a7f9f" stroke-width="2.4"/><circle cx="4.5" cy="10" r="3.8" fill="none" stroke="#6a7f9f" stroke-width="1.4" stroke-dasharray="1.4,1.2"/></svg>
<div class="t" style="left:29.5px;top:264.87px;font-size:11.5px;line-height:11.5px;color:#000;"><u>W</u>iederherstellen</div>
<svg style="left:8px;top:262.7px" width="14" height="14" viewBox="0 0 14 14"><rect x="2" y="5" width="11" height="8" fill="#c8a040"/><rect x="3" y="6" width="9" height="6" fill="#7a6030"/><path d="M1 6 V2 Q1 0.5 4 0.5 H6" fill="none" stroke="#e0a040" stroke-width="1.8"/><path d="M7 8 L9 11 L11 8" fill="none" stroke="#ffd060" stroke-width="1"/></svg>
<div class="t" style="left:29.5px;top:292.67px;font-size:11.5px;line-height:11.5px;color:#000;">BR204_main_215.Tga ü<u>b</u>erschreiben</div>
<div class="t" style="left:29.5px;top:311.87px;font-size:11.5px;line-height:11.5px;color:#000;">Exportieren als ...</div>
<div class="t" style="right:1576px;top:311.87px;font-size:11.5px;line-height:11.5px">Umschalt<span style="margin:0 1.3px">+</span>Strg<span style="margin:0 1.3px">+</span>E</div>
<div class="t" style="left:29.5px;top:330.67px;font-size:11.5px;line-height:11.5px;color:#000;">Vorlage erstellen ...</div>
<div class="t" style="left:29.5px;top:358.57px;font-size:11.5px;line-height:11.5px;color:#000;"><u>D</u>rucken ...</div>
<div class="t" style="right:1576px;top:358.57px;font-size:11.5px;line-height:11.5px">Strg<span style="margin:0 1.3px">+</span>P</div>
<svg style="left:8px;top:356.4px" width="14" height="14" viewBox="0 0 14 14"><rect x="3" y="0.5" width="8" height="4" fill="#fff" stroke="#555"/><rect x="0.5" y="4" width="13" height="5" fill="#000"/><rect x="2.5" y="9" width="9" height="4" fill="#fff" stroke="#555"/></svg>
<div class="t" style="left:29.5px;top:379.97px;font-size:11.5px;line-height:11.5px;color:#000;">S<u>e</u>ite einrichten</div>
<svg style="left:8px;top:377.8px" width="14" height="14" viewBox="0 0 14 14"><path d="M1.5 0.5 H9 L12.5 4 V13.5 H1.5 Z" fill="#f8f8f8" stroke="#aaa"/><path d="M4.5 6 L8.5 10 M8.5 6 L4.5 10" stroke="#e05050" stroke-width="1"/></svg>
<div class="t" style="left:29.5px;top:408.47px;font-size:11.5px;line-height:11.5px;color:#000;">Speicher<u>o</u>rt des Bild kopieren</div>
<svg style="left:8px;top:406.3px" width="14" height="14" viewBox="0 0 14 14"><rect x="6" y="0.5" width="7" height="7" fill="#f4f4f4" stroke="#ccc"/><path d="M0 4 H6 V8 H10 V13 H0 Z" fill="#d0901f"/></svg>
<div class="t" style="left:29.5px;top:429.97px;font-size:11.5px;line-height:11.5px;color:#000;">In <u>D</u>ateiverwaltung anzeigen</div>
<div class="t" style="right:1576px;top:429.97px;font-size:11.5px;line-height:11.5px">Strg<span style="margin:0 1.3px">+</span>Alt<span style="margin:0 1.3px">+</span>F</div>
<svg style="left:8px;top:427.8px" width="14" height="14" viewBox="0 0 14 14"><rect x="1" y="1" width="11" height="12" fill="#c8c8c8" stroke="#aaa"/><rect x="3" y="3" width="7" height="3" fill="#e8e8e8"/><rect x="3" y="8" width="7" height="3" fill="#e8e8e8"/></svg>
<div class="t" style="left:29.5px;top:459.17px;font-size:11.5px;line-height:11.5px;color:#000;"><u>A</u>nsicht schließen</div>
<div class="t" style="right:1576px;top:459.17px;font-size:11.5px;line-height:11.5px">Strg<span style="margin:0 1.3px">+</span>W</div>
<svg style="left:8px;top:457.0px" width="14" height="14" viewBox="0 0 14 14"><path d="M1.5 1.5 L11.5 11.5 M11.5 1.5 L1.5 11.5" stroke="#000" stroke-width="2.2"/></svg>
<div class="t" style="left:29.5px;top:479.87px;font-size:11.5px;line-height:11.5px;color:#000;">Alle schließen</div>
<div class="t" style="right:1576px;top:479.87px;font-size:11.5px;line-height:11.5px">Umschalt<span style="margin:0 1.3px">+</span>Strg<span style="margin:0 1.3px">+</span>W</div>
<svg style="left:8px;top:477.7px" width="14" height="14" viewBox="0 0 14 14"><rect x="3" y="5" width="10" height="8" fill="#c8a040"/><rect x="4" y="7" width="8" height="5" fill="#7a6030"/><path d="M0.5 0.5 L5 5 M5 0.5 L0.5 5" stroke="#000" stroke-width="1.3"/></svg>
<div class="t" style="left:29.5px;top:500.57px;font-size:11.5px;line-height:11.5px;color:#000;"><u>B</u>eenden</div>
<div class="t" style="right:1576px;top:500.57px;font-size:11.5px;line-height:11.5px">Strg<span style="margin:0 1.3px">+</span>Q</div>
<svg style="left:8px;top:498.4px" width="14" height="14" viewBox="0 0 14 14"><rect x="6" y="0.5" width="7" height="12" fill="#4a5a4a" stroke="#999"/><rect x="8" y="2" width="3" height="9" fill="#d8d8d8"/><path d="M0 6.5 H6 M3 3.5 L6.5 6.5 L3 9.5" fill="none" stroke="#d02020" stroke-width="2.4"/></svg>
<div class="t" style="left:29.5px;top:521.97px;font-size:11.5px;line-height:11.5px;color:#000;">Save a <u>B</u>ackup</div>
<svg style="left:8px;top:519.8px" width="14" height="14" viewBox="0 0 14 14"><circle cx="9" cy="5" r="3.3" fill="none" stroke="#5b7db8" stroke-width="2.6"/><circle cx="9" cy="5" r="4.6" fill="none" stroke="#5b7db8" stroke-width="1.6" stroke-dasharray="1.5,1.4"/><circle cx="4.5" cy="10" r="2.6" fill="none" stroke="#6a7f9f" stroke-width="2.4"/><circle cx="4.5" cy="10" r="3.8" fill="none" stroke="#6a7f9f" stroke-width="1.4" stroke-dasharray="1.4,1.2"/></svg>
</body></html>
